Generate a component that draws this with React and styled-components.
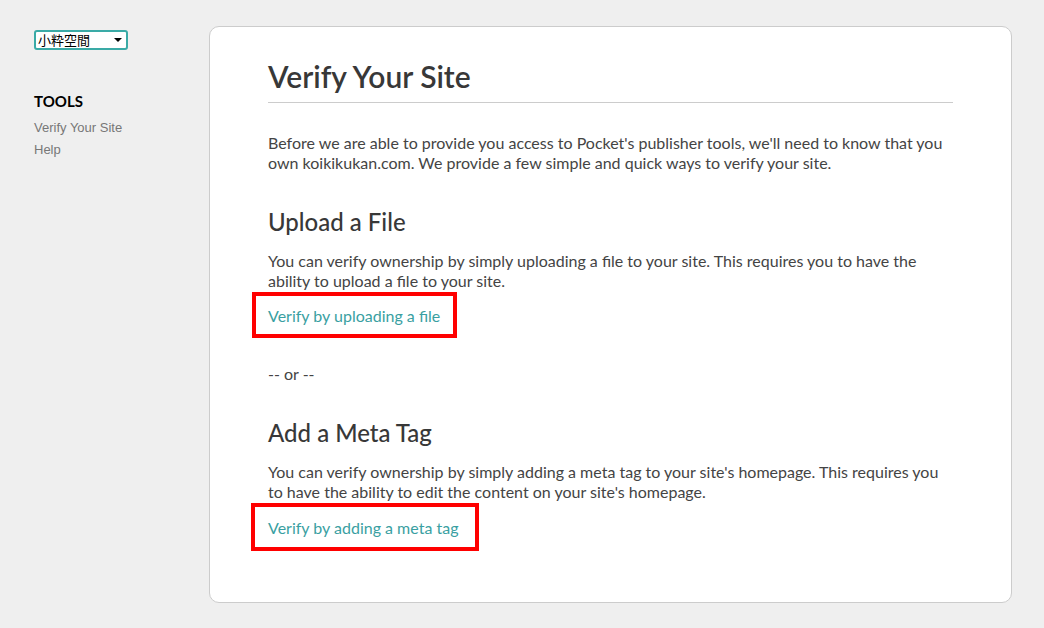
import styled, { createGlobalStyle } from "styled-components";

const GlobalStyle = createGlobalStyle`
  html, body {
    margin: 0;
    padding: 0;
    background: #efefef;
  }
  body {
    font-family: "Lato", "Liberation Sans", sans-serif;
  }
`;

export default function App() {
  return (
    <Page>
      <GlobalStyle />
      <Sidebar>
        <SelectBox>
          <SiteSelect defaultValue="koikikukan">
            <option value="koikikukan">小粋空間</option>
          </SiteSelect>
          <Arrow />
        </SelectBox>
        <ToolsTitle>TOOLS</ToolsTitle>
        <SideLink href="#">Verify Your Site</SideLink>
        <SideLink href="#">Help</SideLink>
      </Sidebar>
      <Card>
        <Title>Verify Your Site</Title>
        <Text>
          Before we are able to provide you access to Pocket's publisher tools, we'll need to know that you
          own koikikukan.com. We provide a few simple and quick ways to verify your site.
        </Text>
        <Section>
          <Heading>Upload a File</Heading>
          <Text>
            You can verify ownership by simply uploading a file to your site. This requires you to have the
            ability to upload a file to your site.
          </Text>
          <Marked $width={205} $height={46} $shift={16}>
            <Link href="#">Verify by uploading a file</Link>
          </Marked>
        </Section>
        <Or>-- or --</Or>
        <Section>
          <Heading>Add a Meta Tag</Heading>
          <Text>
            You can verify ownership by simply adding a meta tag to your site's homepage. This requires you
            to have the ability to edit the content on your site's homepage.
          </Text>
          <Marked $width={228} $height={48} $shift={17}>
            <Link href="#">Verify by adding a meta tag</Link>
          </Marked>
        </Section>
      </Card>
    </Page>
  );
}

const Page = styled.div`
  display: flex;
  align-items: flex-start;
  padding: 26px 32px 26px 34px;
  min-height: 628px;
  box-sizing: border-box;
`;

const Sidebar = styled.div`
  width: 175px;
  display: flex;
  flex-direction: column;
  align-items: flex-start;
`;

const SelectBox = styled.div`
  position: relative;
  margin-top: 3px;
  width: 94px;
  height: 20px;
`;

const SiteSelect = styled.select`
  appearance: none;
  width: 100%;
  height: 100%;
  box-sizing: border-box;
  border: 2px solid #3aaaa6;
  border-radius: 3px;
  background: #fff;
  font-family: "Noto Sans CJK JP", sans-serif;
  font-size: 13px;
  line-height: 16px;
  color: #000;
  padding: 0 0 0 2px;
  outline: none;
`;

const Arrow = styled.span`
  position: absolute;
  right: 6px;
  top: 9px;
  width: 0;
  height: 0;
  border-left: 4px solid transparent;
  border-right: 4px solid transparent;
  border-top: 4px solid #000;
  pointer-events: none;
`;

const ToolsTitle = styled.div`
  margin-top: 43px;
  font-size: 15px;
  font-weight: 700;
  color: #000;
  line-height: 18px;
`;

const SideLink = styled.a`
  margin-top: 9px;
  font-family: "Liberation Sans", Arial, sans-serif;
  font-size: 13px;
  line-height: 18px;
  color: #777;
  text-decoration: none;
  & + & {
    margin-top: 4px;
  }
`;

const Card = styled.div`
  flex: 1;
  background: #fff;
  border: 1px solid #ccc;
  border-radius: 10px;
  padding: 23px 58px 51px 58px;
  color: #444;
`;

const Title = styled.h1`
  margin: 0 0 30px;
  font-size: 30px;
  font-weight: 600;
  line-height: 52px;
  border-bottom: 1px solid #ccc;
  color: #383838;
`;

const Text = styled.p`
  margin: 0;
  font-size: 16px;
  line-height: 20px;
`;

const Section = styled.div`
  display: flex;
  flex-direction: column;
  align-items: flex-start;
  margin-top: 35px;
`;

const Heading = styled.h2`
  margin: 0 0 15px;
  font-size: 24px;
  font-weight: 500;
  line-height: 28px;
  color: #383838;
`;

const Marked = styled.div`
  margin: 1px 0 0 -${(p) => p.$shift}px;
  width: ${(p) => p.$width}px;
  height: ${(p) => p.$height}px;
  box-sizing: border-box;
  border: 4px solid #ff0000;
  padding-left: ${(p) => p.$shift - 4}px;
  display: flex;
  align-items: center;
`;

const Link = styled.a`
  font-size: 16px;
  color: #3a9fa2;
  text-decoration: none;
`;

const Or = styled.div`
  margin-top: 26px;
  font-size: 16px;
  line-height: 20px;
`;
